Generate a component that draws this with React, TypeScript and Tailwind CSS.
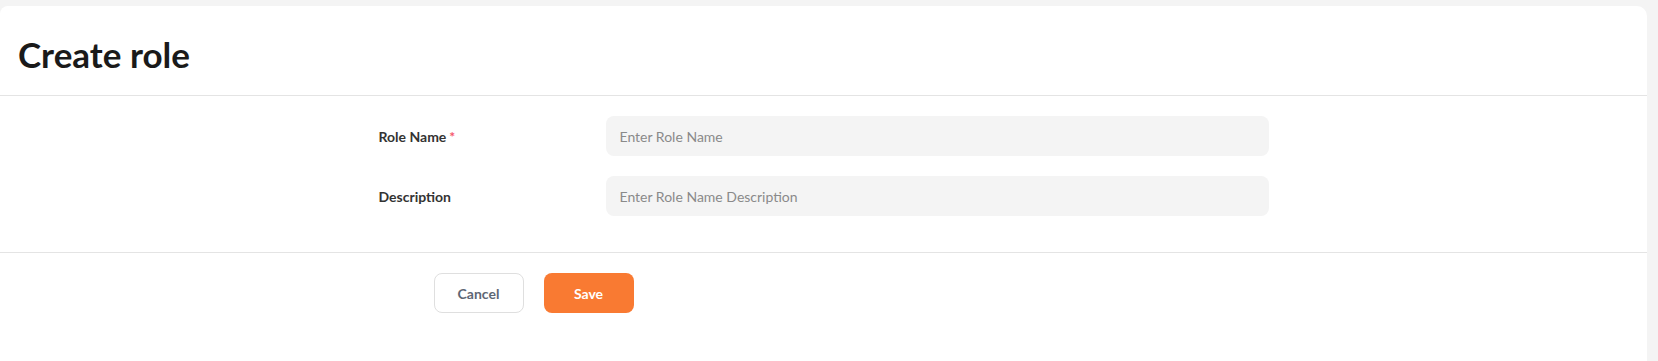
import React from "react";

export default function App() {
  return (
    <div
      className="min-h-[361px] bg-[#f4f4f4] pt-[6px] pr-[11px] flex flex-col"
      style={{ fontFamily: "Lato, 'Open Sans', sans-serif" }}
    >
      <div className="flex-1 bg-white rounded-tl-[8px] rounded-tr-[10px] min-h-[355px]">
        <div className="pt-[27px] pb-[20px] px-[18px] border-b border-[#e4e4e4]">
          <h1 className="text-[35px] leading-[42px] font-bold text-[#1a1a1a]">Create role</h1>
        </div>
        <div className="pt-[20px] pb-[36px] border-b border-[#e4e4e4]">
          <div className="w-[890px] mx-auto flex flex-col gap-[20px]">
            <div className="flex items-center">
              <label className="w-[227px] text-[14px] font-bold text-[#333]">
                Role Name<span className="text-[#f5576c] ml-[3px]">*</span>
              </label>
              <input
                className="flex-1 h-[40px] rounded-[8px] bg-[#f4f4f4] px-[14px] text-[14px] text-[#333] placeholder:text-[#8a8a8a] outline-none"
                placeholder="Enter Role Name"
              />
            </div>
            <div className="flex items-center">
              <label className="w-[227px] text-[14px] font-bold text-[#333]">Description</label>
              <input
                className="flex-1 h-[40px] rounded-[8px] bg-[#f4f4f4] px-[14px] text-[14px] text-[#333] placeholder:text-[#8a8a8a] outline-none"
                placeholder="Enter Role Name Description"
              />
            </div>
          </div>
        </div>
        <div className="pt-[20px]">
          <div className="w-[890px] mx-auto pl-[55px] flex gap-[20px]">
            <button className="w-[90px] h-[40px] rounded-[8px] border border-[#dfdfdf] bg-white text-[14px] font-bold text-[#5d6775]">
              Cancel
            </button>
            <button className="w-[90px] h-[40px] rounded-[8px] bg-[#f97a32] text-[14px] font-bold text-white">
              Save
            </button>
          </div>
        </div>
      </div>
    </div>
  );
}
